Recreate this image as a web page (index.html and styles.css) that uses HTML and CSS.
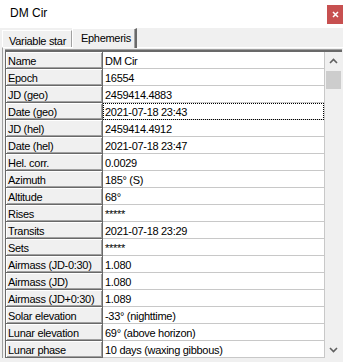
FILE: index.html
```html
<!DOCTYPE html>
<html lang="en">
<head>
  <meta charset="UTF-8" />
  <title>DM Cir</title>
  <link rel="stylesheet" href="styles.css">
</head>
<body>
  <div class="titlebar">
    <span class="title">DM Cir</span>
    <span class="close">
      <svg width="7" height="7" viewBox="0 0 7 7"><path d="M1 1 L6 6 M6 1 L1 6" stroke="#fff" stroke-width="1.5"/></svg>
    </span>
  </div>
  <div class="tabs">
    <div class="tab">Variable star</div>
    <div class="tab active">Ephemeris</div>
  </div>
  <div class="page">
    <div class="grid">
      <div class="inner">
        <div class="rows">
          <div class="row"><div class="key">Name</div><div class="val">DM Cir</div></div>
          <div class="row"><div class="key">Epoch</div><div class="val">16554</div></div>
          <div class="row"><div class="key">JD (geo)</div><div class="val">2459414.4883</div></div>
          <div class="row"><div class="key">Date (geo)</div><div class="val focus">2021-07-18 23:43</div></div>
          <div class="row"><div class="key">JD (hel)</div><div class="val">2459414.4912</div></div>
          <div class="row"><div class="key">Date (hel)</div><div class="val">2021-07-18 23:47</div></div>
          <div class="row"><div class="key">Hel. corr.</div><div class="val">0.0029</div></div>
          <div class="row"><div class="key">Azimuth</div><div class="val">185° (S)</div></div>
          <div class="row"><div class="key">Altitude</div><div class="val">68°</div></div>
          <div class="row"><div class="key">Rises</div><div class="val">*****</div></div>
          <div class="row"><div class="key">Transits</div><div class="val">2021-07-18 23:29</div></div>
          <div class="row"><div class="key">Sets</div><div class="val">*****</div></div>
          <div class="row"><div class="key">Airmass (JD-0:30)</div><div class="val">1.080</div></div>
          <div class="row"><div class="key">Airmass (JD)</div><div class="val">1.080</div></div>
          <div class="row"><div class="key">Airmass (JD+0:30)</div><div class="val">1.089</div></div>
          <div class="row"><div class="key">Solar elevation</div><div class="val">-33° (nighttime)</div></div>
          <div class="row"><div class="key">Lunar elevation</div><div class="val">69° (above horizon)</div></div>
          <div class="row"><div class="key">Lunar phase</div><div class="val">10 days (waxing gibbous)</div></div>
        </div>
        <div class="scrollbar">
          <div class="arrow"><svg width="9" height="6" viewBox="0 0 9 6"><path d="M1 5 L4.5 1.5 L8 5" fill="none" stroke="#606060" stroke-width="1.6"/></svg></div>
          <div class="track">
            <div class="thumb"></div>
          </div>
          <div class="arrow"><svg width="9" height="6" viewBox="0 0 9 6"><path d="M1 1 L4.5 4.5 L8 1" fill="none" stroke="#606060" stroke-width="1.6"/></svg></div>
        </div>
      </div>
    </div>
  </div>
</body>
</html>
```

FILE: styles.css
```css
body {
  margin: 0;
  width: 343px;
  height: 362px;
  overflow: hidden;
  background: #f0f0f0;
  font-family: "Liberation Sans", Arial, sans-serif;
  font-size: 11px;
  letter-spacing: -0.3px;
  color: #000;
}
.titlebar {
  height: 28px;
  background: #fff;
  display: flex;
  align-items: flex-start;
  justify-content: space-between;
}
.title {
  font-size: 12px;
  letter-spacing: 0;
  line-height: 14px;
  margin: 6px 0 0 10px;
}
.close {
  margin-top: 5px;
  width: 16px;
  height: 19px;
  background: #c75050;
  display: flex;
  align-items: center;
  justify-content: center;
}
.tabs {
  height: 19px;
  display: flex;
  align-items: flex-end;
  padding-left: 2px;
}
.tab {
  box-sizing: border-box;
  height: 17px;
  padding: 4px 0 0 6px;
  width: 70px;
  line-height: 12px;
  white-space: nowrap;
  border-top: 1px solid #fff;
  border-left: 1px solid #fff;
  border-right: 1px solid #a0a0a0;
}
.tab.active {
  height: 20px;
  width: 65px;
  margin-bottom: -1px;
  padding: 3px 0 0 8px;
  border-right: 2px solid #696969;
  box-shadow: inset -1px 0 #a0a0a0;
  background: #f0f0f0;
  position: relative;
}
.page {
  margin-left: 2px;
  border-top: 1px solid #fff;
  border-left: 1px solid #a0a0a0;
  padding: 1px 0 0 2px;
}
.grid {
  width: 337px;
  border-top: 1px solid #a0a0a0;
}
.inner {
  display: flex;
  border-top: 2px solid #696969;
  border-left: 1px solid #696969;
}
.rows {
  width: 318px;
  border-right: 1px solid #c8c8c8;
}
.row {
  display: flex;
  height: 17px;
}
.key {
  box-sizing: border-box;
  width: 97px;
  height: 17px;
  background: #f0f0f0;
  border-right: 1px solid #696969;
  border-bottom: 1px solid #696969;
  box-shadow: inset 1px 1px #fff, inset -1px -1px #a0a0a0;
  padding: 3px 0 0 2px;
  line-height: 12px;
  white-space: nowrap;
  overflow: hidden;
}
.val {
  box-sizing: border-box;
  flex: 1;
  height: 17px;
  background: #fff;
  border-bottom: 1px solid #c8c8c8;
  padding: 3px 0 0 2px;
  line-height: 12px;
  white-space: nowrap;
  overflow: hidden;
}
.val.focus {
  outline: 1px dotted #000;
  outline-offset: -1px;
}
.scrollbar {
  width: 17px;
  display: flex;
  flex-direction: column;
  background: #f0f0f0;
}
.arrow {
  height: 17px;
  display: flex;
  align-items: center;
  justify-content: center;
}
.track {
  flex: 1;
  padding: 2px 1px 0;
}
.thumb {
  height: 18px;
  background: #cdcdcd;
}
```
